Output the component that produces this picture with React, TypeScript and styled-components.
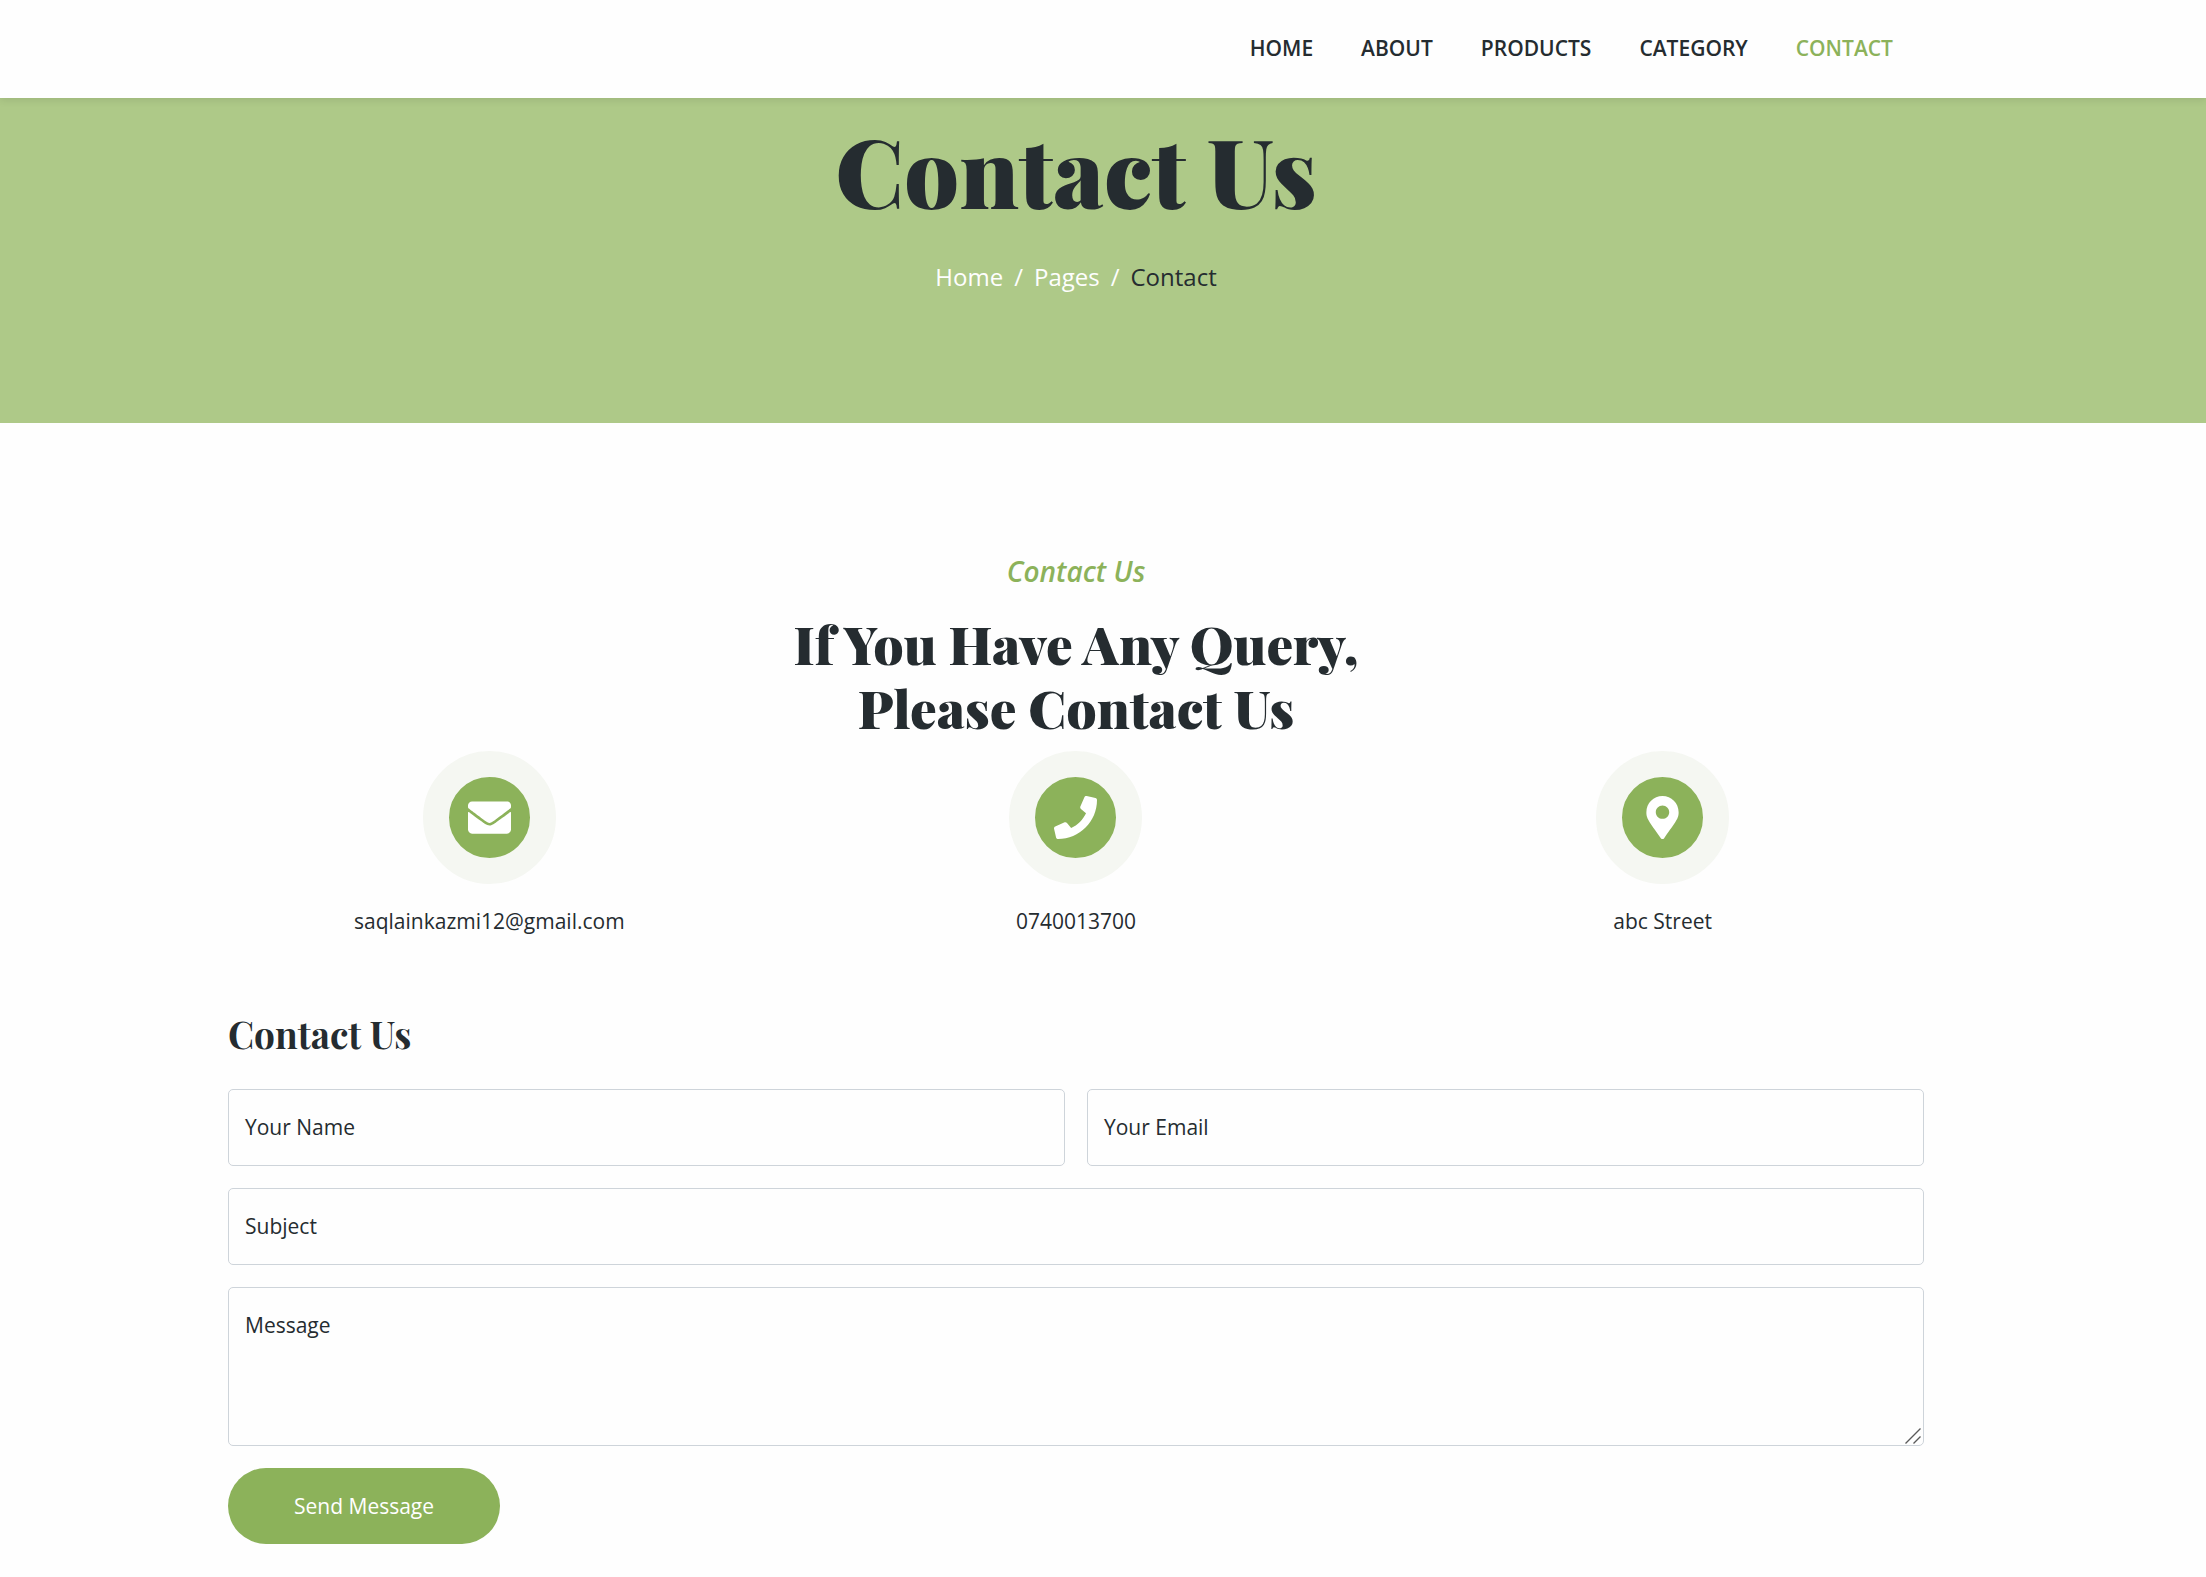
import React from "react";
import styled, { createGlobalStyle } from "styled-components";
import { FaEnvelope, FaPhone, FaMapMarkerAlt } from "react-icons/fa";

const color = {
  primary: "#8cb25a",
  hero: "#aec988",
  dark: "#252c30",
  light: "#f5f7f2",
  border: "#ced4da",
  page: "#fefefe",
};

const GlobalStyle = createGlobalStyle`
  *, *::before, *::after { box-sizing: border-box; }
  body {
    margin: 0;
    background: ${color.page};
    color: ${color.dark};
    font-family: "Open Sans", "Noto Sans", sans-serif;
    font-size: 21px;
    line-height: 32px;
  }
  h1, h2, h3, p, ol, ul { margin: 0; padding: 0; }
  h1, h2, h3 {
    font-family: "Playfair Display", "Liberation Serif", serif;
    font-weight: 700;
  }
`;

const Header = styled.header`
  position: relative;
  z-index: 1;
  background: ${color.page};
  box-shadow: 0 2px 8px rgba(0, 0, 0, 0.1);
`;

const Nav = styled.nav`
  display: flex;
  justify-content: flex-end;
  gap: 48px;
  padding: 32px 313px 34px 228px;
`;

const NavLink = styled.a<{ $active?: boolean }>`
  color: ${(p) => (p.$active ? color.primary : color.dark)};
  font-weight: 600;
  text-decoration: none;
  text-transform: uppercase;
`;

const Hero = styled.section`
  display: flex;
  flex-direction: column;
  align-items: center;
  padding: 14px 282px 130px 228px;
  background: ${color.hero};
`;

const Title = styled.h1`
  margin-bottom: 34px;
  font-size: 96px;
  font-weight: 900;
  line-height: 115px;
`;

const Breadcrumb = styled.ol`
  display: flex;
  list-style: none;
  font-size: 24px;
`;

const Crumb = styled.li`
  & + &::before {
    content: "/";
    padding: 0 11px;
    color: ${color.page};
  }
`;

const CrumbLink = styled.a`
  color: ${color.page};
  text-decoration: none;
`;

const Main = styled.main`
  padding: 132px 282px 32px 228px;
`;

const Intro = styled.div`
  display: flex;
  flex-direction: column;
  align-items: center;
  margin-bottom: 12px;
  text-align: center;
`;

const Eyebrow = styled.p`
  margin-bottom: 24px;
  color: ${color.primary};
  font-size: 28px;
  font-style: italic;
  font-weight: 600;
`;

const Heading = styled.h2`
  font-size: 53px;
  font-weight: 900;
  line-height: 64px;
`;

const Contacts = styled.ul`
  display: grid;
  grid-template-columns: repeat(3, 1fr);
  gap: 64px;
  margin-bottom: 74px;
  list-style: none;
`;

const Contact = styled.li`
  display: flex;
  flex-direction: column;
  align-items: center;
  gap: 21px;
`;

const Badge = styled.span`
  display: flex;
  align-items: center;
  justify-content: center;
  width: 133px;
  height: 133px;
  border: 26px solid ${color.light};
  border-radius: 50%;
  background: ${color.primary};
  color: #fff;
  font-size: 43px;
`;

const FormTitle = styled.h3`
  margin-bottom: 33px;
  font-size: 37px;
  line-height: 45px;
`;

const Form = styled.form`
  display: grid;
  grid-template-columns: 1fr 1fr;
  gap: 22px;
`;

const Field = styled.div<{ $wide?: boolean }>`
  position: relative;
  display: flex;
  grid-column: ${(p) => (p.$wide ? "1 / -1" : "auto")};
`;

const Label = styled.label`
  position: absolute;
  top: 22px;
  left: 17px;
  pointer-events: none;
`;

const Input = styled.input`
  width: 100%;
  height: 77px;
  padding: 22px 16px;
  border: 1px solid ${color.border};
  border-radius: 5px;
  background: transparent;
  color: inherit;
  font: inherit;
`;

const TextArea = styled(Input).attrs({ as: "textarea" })`
  height: 159px;
  resize: vertical;

  &::-webkit-resizer {
    background: transparent;
  }
`;

const Grip = styled.svg`
  position: absolute;
  right: 3px;
  bottom: 2px;
  pointer-events: none;
`;

const Submit = styled.button`
  justify-self: start;
  padding: 22px 66px;
  border: 0;
  border-radius: 38px;
  background: ${color.primary};
  color: #fff;
  font: inherit;
`;

const links = ["Home", "About", "Products", "Category", "Contact"];

const contacts = [
  { icon: <FaEnvelope />, text: "saqlainkazmi12@gmail.com" },
  { icon: <FaPhone />, text: "0740013700" },
  { icon: <FaMapMarkerAlt />, text: "abc Street" },
];

export default function App() {
  return (
    <>
      <GlobalStyle />
      <Header>
        <Nav>
          {links.map((name) => (
            <NavLink key={name} href="#" $active={name === "Contact"}>
              {name}
            </NavLink>
          ))}
        </Nav>
      </Header>
      <Hero>
        <Title>Contact Us</Title>
        <Breadcrumb>
          <Crumb>
            <CrumbLink href="#">Home</CrumbLink>
          </Crumb>
          <Crumb>
            <CrumbLink href="#">Pages</CrumbLink>
          </Crumb>
          <Crumb aria-current="page">Contact</Crumb>
        </Breadcrumb>
      </Hero>
      <Main>
        <Intro>
          <Eyebrow>Contact Us</Eyebrow>
          <Heading>
            If You Have Any Query,
            <br />
            Please Contact Us
          </Heading>
        </Intro>
        <Contacts>
          {contacts.map(({ icon, text }) => (
            <Contact key={text}>
              <Badge>{icon}</Badge>
              <p>{text}</p>
            </Contact>
          ))}
        </Contacts>
        <FormTitle>Contact Us</FormTitle>
        <Form>
          <Field>
            <Input id="name" type="text" />
            <Label htmlFor="name">Your Name</Label>
          </Field>
          <Field>
            <Input id="email" type="email" />
            <Label htmlFor="email">Your Email</Label>
          </Field>
          <Field $wide>
            <Input id="subject" type="text" />
            <Label htmlFor="subject">Subject</Label>
          </Field>
          <Field $wide>
            <TextArea id="message" />
            <Label htmlFor="message">Message</Label>
            <Grip width="16" height="16" viewBox="0 0 16 16" aria-hidden="true">
              <path
                d="M0.5 15.5 15.5 0.5M8.5 15.5 15.5 8.5"
                stroke="#5a5a5a"
                strokeWidth="1.4"
                fill="none"
              />
            </Grip>
          </Field>
          <Submit type="submit">Send Message</Submit>
        </Form>
      </Main>
    </>
  );
}
